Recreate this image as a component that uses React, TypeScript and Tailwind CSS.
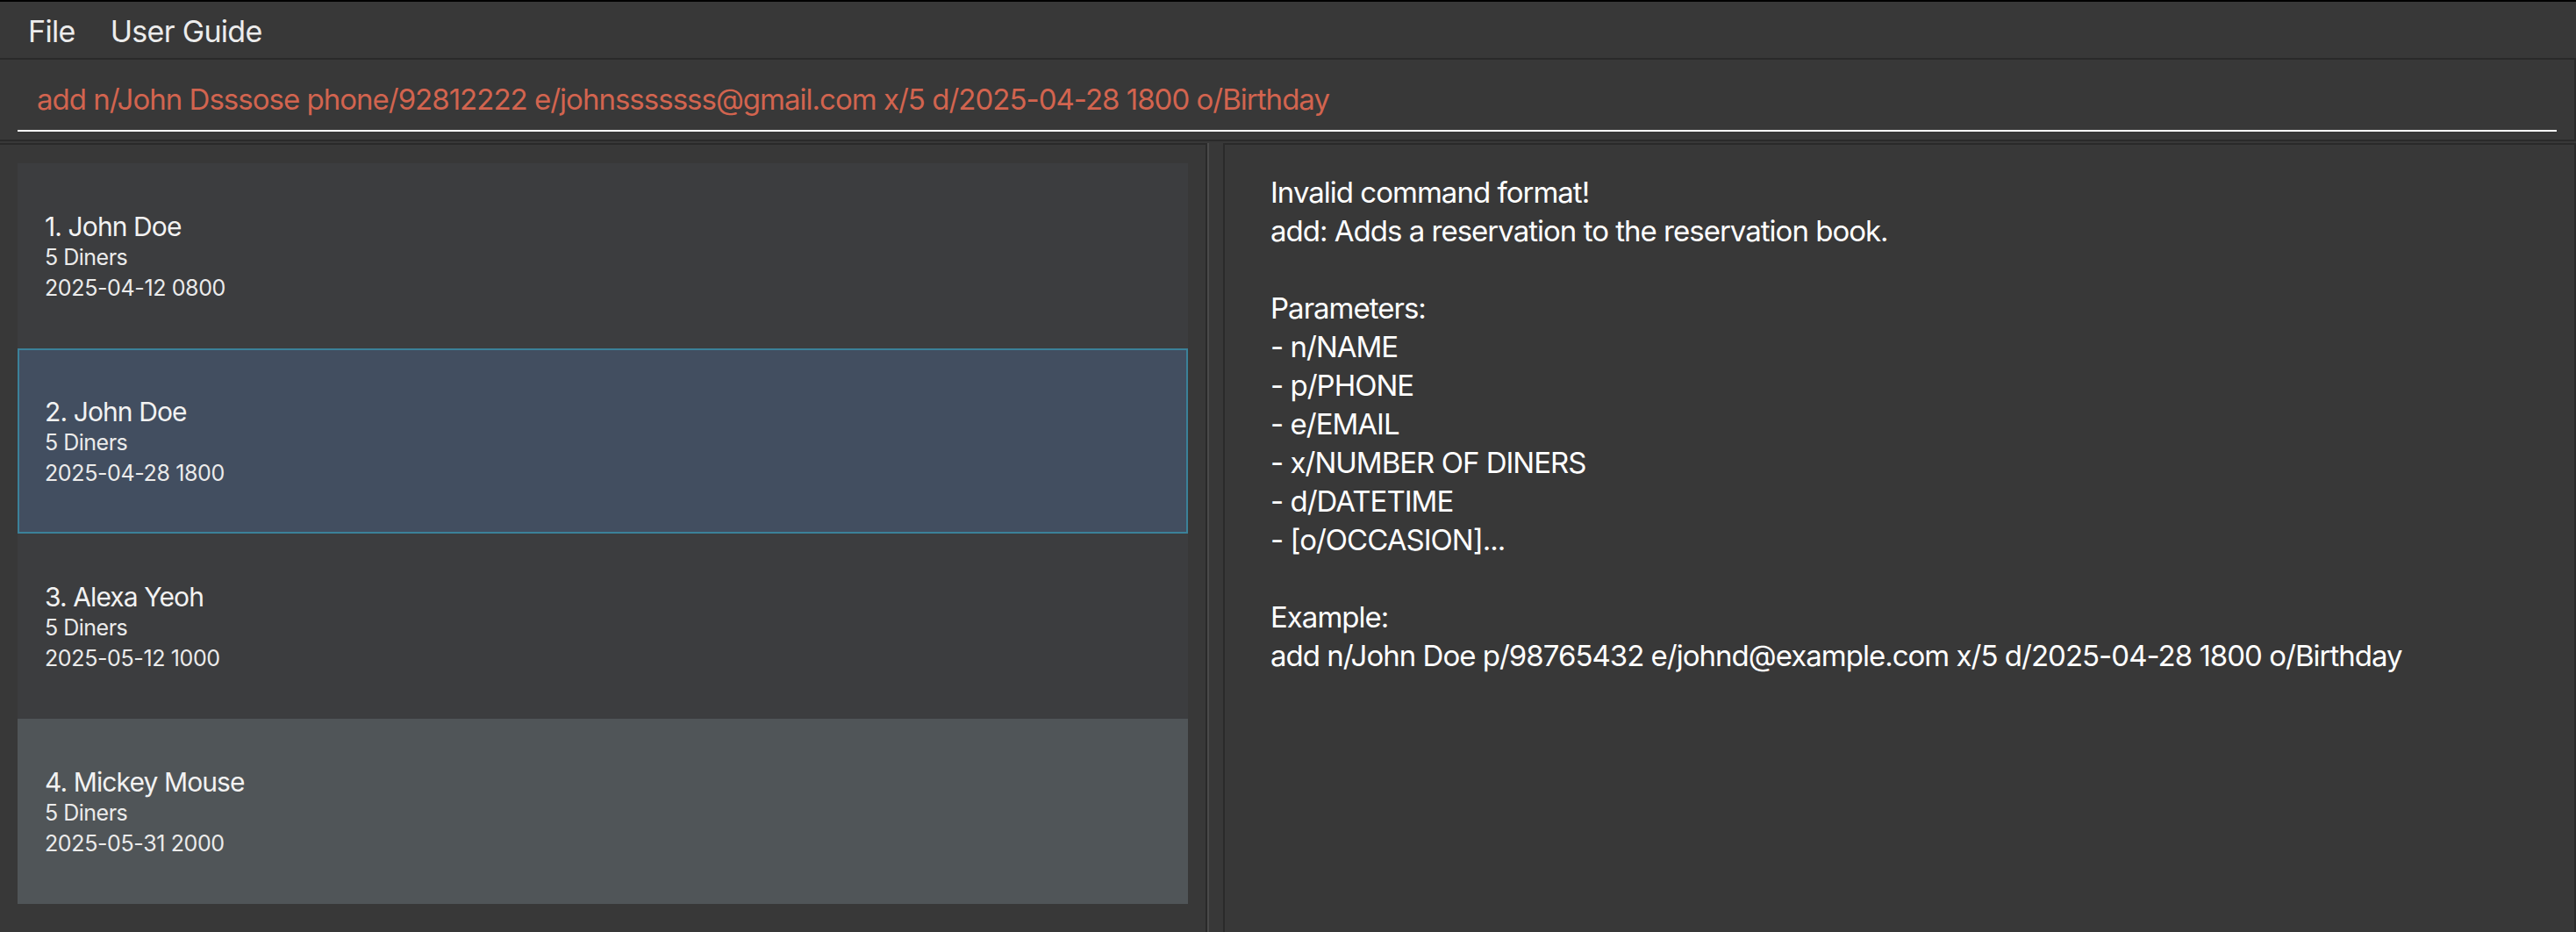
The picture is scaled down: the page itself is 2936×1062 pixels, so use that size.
const reservations = [
  { name: 'John Doe', diners: 5, when: '2025-04-12 0800' },
  { name: 'John Doe', diners: 5, when: '2025-04-28 1800' },
  { name: 'Alexa Yeoh', diners: 5, when: '2025-05-12 1000' },
  { name: 'Mickey Mouse', diners: 5, when: '2025-05-31 2000' },
];

const selectedIndex = 1;

const feedback = [
  'Invalid command format!',
  'add: Adds a reservation to the reservation book.',
  '',
  'Parameters:',
  '- n/NAME',
  '- p/PHONE',
  '- e/EMAIL',
  '- x/NUMBER OF DINERS',
  '- d/DATETIME',
  '- [o/OCCASION]...',
  '',
  'Example:',
  'add n/John Doe p/98765432 e/johnd@example.com x/5 d/2025-04-28 1800 o/Birthday',
];

function ReservationCard({ index, name, diners, when }: { index: number; name: string; diners: number; when: string }) {
  const tone =
    index === selectedIndex
      ? 'bg-[#424e60] border-[#3b8199]'
      : index % 2 === 1
        ? 'bg-[#505558] border-transparent'
        : 'bg-[#3c3d3f] border-transparent';

  return (
    <div className={`h-[211px] border-2 pl-[29px] pt-[52px] ${tone}`}>
      <div className="text-[30px] leading-[36px] tracking-[-0.03em] text-[#f2f2f2]">
        {index + 1}. {name}
      </div>
      <div className="text-[25px] leading-[35px] tracking-[-0.02em] text-[#ebebeb]">{diners} Diners</div>
      <div className="text-[25px] leading-[35px] tracking-[-0.015em] text-[#ebebeb]">{when}</div>
    </div>
  );
}

export default function App() {
  return (
    <div className="flex h-[1062px] w-full flex-col overflow-hidden border-t-2 border-black bg-[#383838] font-['Inter',sans-serif]">
      {/* menu bar */}
      <div className="flex h-[66px] shrink-0 items-center border-b-2 border-[#2a2a2a] pl-3 pt-[3px] text-[34px] leading-[40px] tracking-[-0.02em] text-[#ececec]">
        <span className="px-5">File</span>
        <span className="px-5">User Guide</span>
      </div>

      {/* command box */}
      <div className="h-[93px] shrink-0 border-b-2 border-r-2 border-[#2a2a2a] px-[20px] pt-[25px]">
        <div className="border-b-2 border-white pb-[15px] pl-[22px] text-[33px] leading-[40px] tracking-[-0.03em] whitespace-nowrap text-[#d2644f]">
          add n/John Dsssose phone/92812222 e/johnsssssss@gmail.com x/5 d/2025-04-28 1800 o/Birthday
        </div>
      </div>

      <div className="mt-[2px] flex min-h-0 flex-1">
        {/* reservation list */}
        <div className="flex w-[1376px] shrink-0 flex-col border-r-2 border-t-2 border-[#2a2a2a] px-[20px] pt-[21px]">
          {reservations.map((r, i) => (
            <ReservationCard key={i} index={i} name={r.name} diners={r.diners} when={r.when} />
          ))}
        </div>

        {/* split divider */}
        <div className="w-[18px] shrink-0 border-l-2 border-[#4a4a4a]" />

        {/* result display */}
        <div className="flex-1 border-l-2 border-r-2 border-t-2 border-[#2a2a2a] pl-[52px] pt-[32px]">
          {feedback.map((line, i) => (
            <div key={i} className="h-[44px] whitespace-pre text-[33px] leading-[44px] tracking-[-0.03em] text-white">
              {line}
            </div>
          ))}
        </div>
      </div>
    </div>
  );
}
